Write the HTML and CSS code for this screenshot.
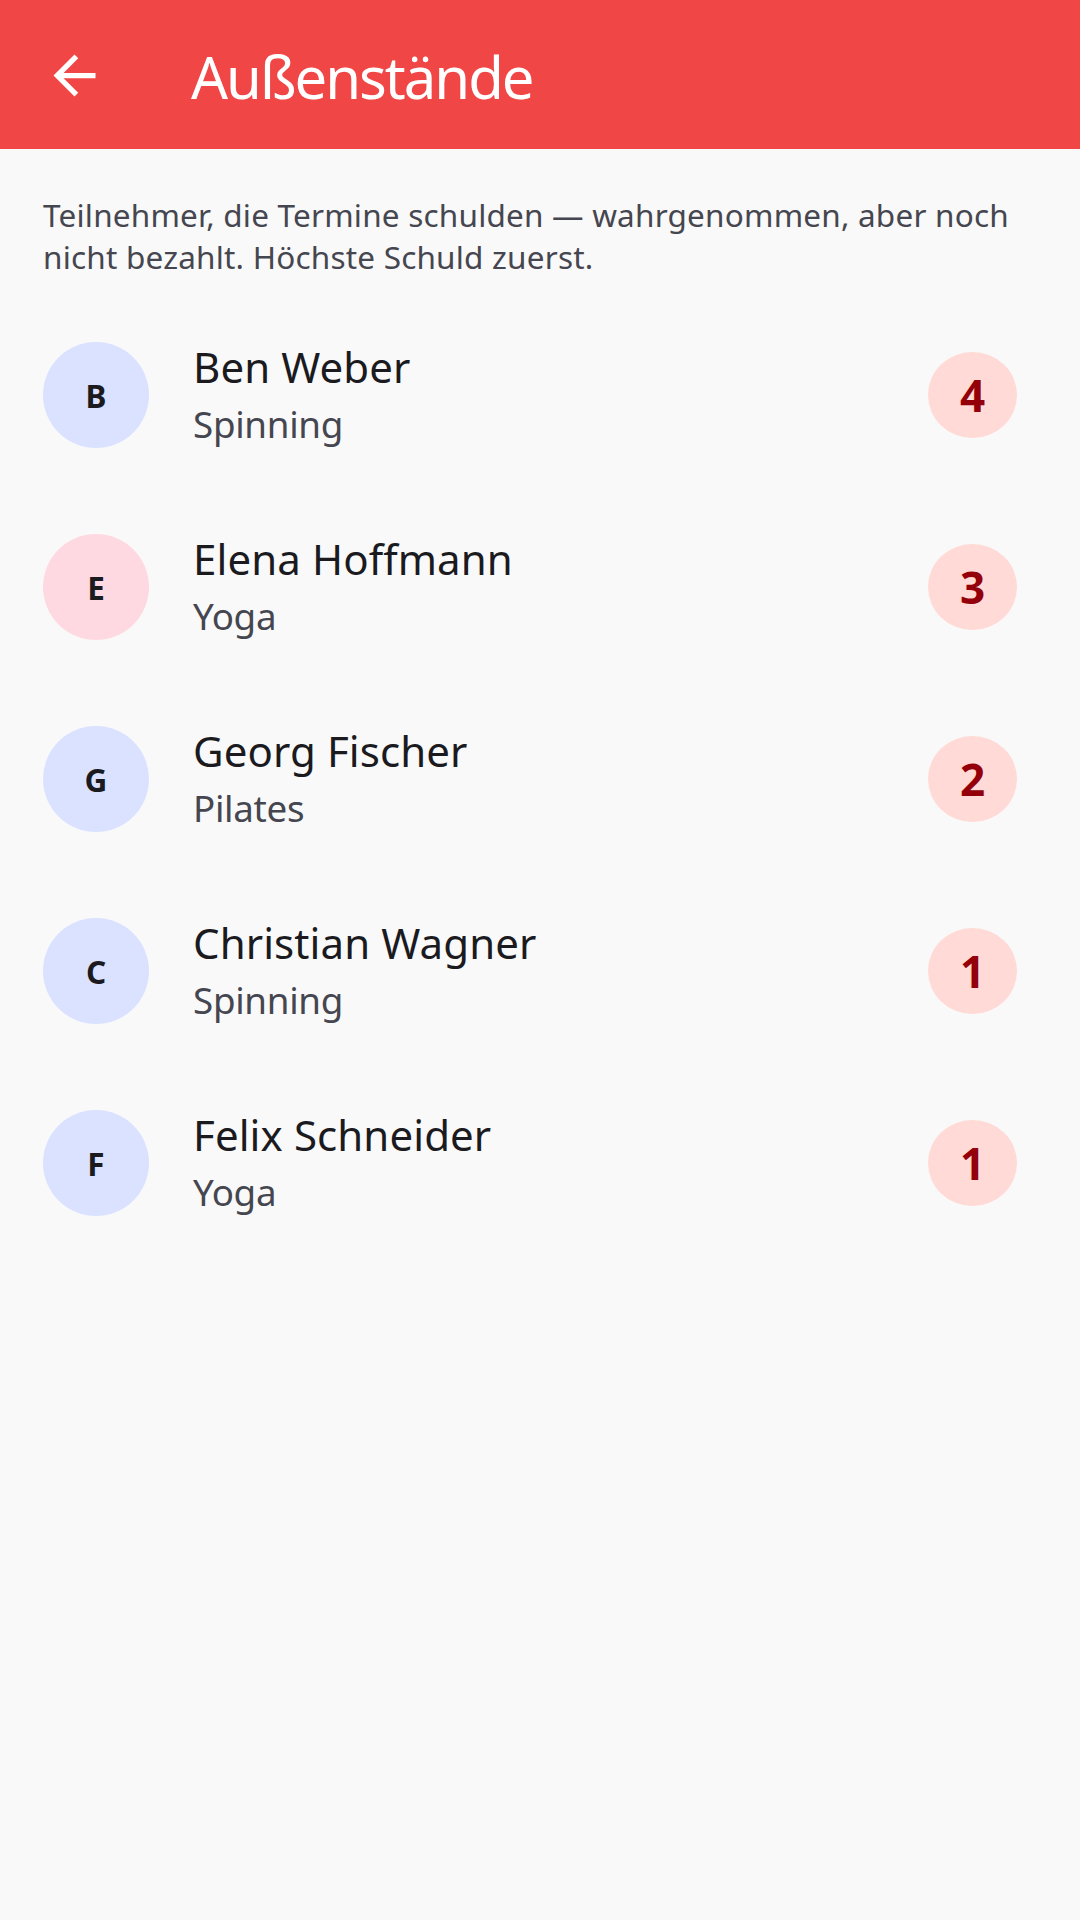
FILE: index.html
```html
<!DOCTYPE html>
<html lang="de">
<head>
  <meta charset="UTF-8">
  <title>Außenstände</title>
  <link rel="stylesheet" href="styles.css">
</head>
<body>

  <header class="app-bar">
    <div class="leading">
      <svg class="back-icon" viewBox="0 0 24 24" width="63" height="63">
        <path d="M20 11H7.83l5.59-5.59L12 4l-8 8 8 8 1.41-1.41L7.83 13H20v-2z" fill="#fff"/>
      </svg>
    </div>
    <h1 class="title">Außenstände</h1>
  </header>

  <p class="intro">Teilnehmer, die Termine schulden — wahrgenommen, aber noch nicht bezahlt. Höchste Schuld zuerst.</p>

  <ul class="debtors">
    <li class="row">
      <div class="avatar blue">B</div>
      <div class="info">
        <div class="name">Ben Weber</div>
        <div class="course">Spinning</div>
      </div>
      <div class="badge">4</div>
    </li>
    <li class="row">
      <div class="avatar pink">E</div>
      <div class="info">
        <div class="name">Elena Hoffmann</div>
        <div class="course">Yoga</div>
      </div>
      <div class="badge">3</div>
    </li>
    <li class="row">
      <div class="avatar blue">G</div>
      <div class="info">
        <div class="name">Georg Fischer</div>
        <div class="course">Pilates</div>
      </div>
      <div class="badge">2</div>
    </li>
    <li class="row">
      <div class="avatar blue">C</div>
      <div class="info">
        <div class="name">Christian Wagner</div>
        <div class="course">Spinning</div>
      </div>
      <div class="badge">1</div>
    </li>
    <li class="row">
      <div class="avatar blue">F</div>
      <div class="info">
        <div class="name">Felix Schneider</div>
        <div class="course">Yoga</div>
      </div>
      <div class="badge">1</div>
    </li>
  </ul>

</body>
</html>
```

FILE: styles.css
```css
body {
  margin: 0;
  padding: 0;
  font-family: 'Noto Sans', 'Open Sans', sans-serif;
  background: #f9f9f9;
  color: #1b1b1f;
  min-height: 1920px;
}

.app-bar {
  display: flex;
  align-items: center;
  height: 149px;
  background: #f14646;
  color: #fff;
}

.leading {
  width: 149px;
  height: 149px;
  display: flex;
  align-items: center;
  justify-content: center;
}

.back-icon {
  display: block;
  margin-top: 2px;
}

.title {
  margin: 4px 0 0 42px;
  font-size: 58px;
  font-weight: 400;
  line-height: 1;
  letter-spacing: -2px;
}

.intro {
  margin: 0;
  padding: 45px 42px 21px 43px;
  font-size: 31.5px;
  line-height: 42px;
  letter-spacing: 0.2px;
  color: #45464f;
}

.debtors {
  list-style: none;
  margin: 0;
  padding: 0;
}

.row {
  display: flex;
  align-items: center;
  height: 192px;
  padding: 0 63px 0 43px;
}

.avatar {
  width: 106px;
  height: 106px;
  border-radius: 50%;
  display: flex;
  align-items: center;
  justify-content: center;
  font-size: 31.5px;
  font-weight: 700;
  color: #1b1b1f;
  flex-shrink: 0;
}

.avatar.blue {
  background: #dae2ff;
}

.avatar.pink {
  background: #ffd9e2;
}

.info {
  margin-left: 44px;
  padding-bottom: 5px;
  flex: 1;
}

.name {
  font-size: 42px;
  line-height: 63px;
  letter-spacing: 0.1px;
  color: #1b1b1f;
}

.course {
  font-size: 36.75px;
  line-height: 52px;
  letter-spacing: -0.3px;
  color: #45464f;
}

.badge {
  width: 89px;
  height: 86px;
  border-radius: 50%;
  background: #ffdad6;
  color: #93000a;
  font-size: 44px;
  font-weight: 700;
  display: flex;
  align-items: center;
  justify-content: center;
}
```
